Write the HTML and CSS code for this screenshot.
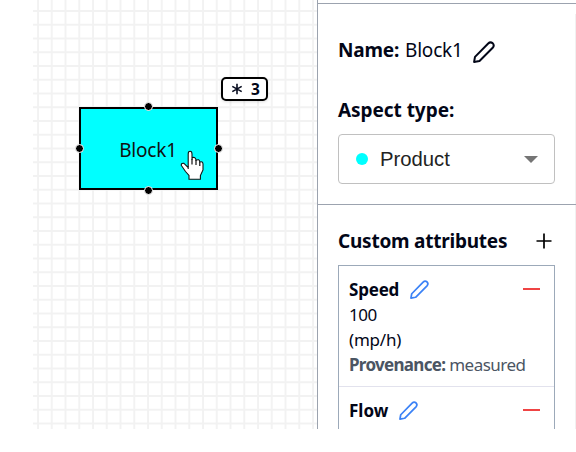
FILE: index.html
```
<!DOCTYPE html>
<html lang="en">
<head>
<meta charset="utf-8">
<title>Block editor</title>
<link rel="stylesheet" href="styles.css">
</head>
<body>
<svg class="symbols" width="0" height="0">
  <symbol id="pencil" viewBox="0 0 22 22"><path d="M1.1 20.9 2 15.9 15.2 2.5Q17.3.4 19.6 2.1 21.8 4.4 19.7 6.8L6.5 20Z" fill="none" stroke="currentColor" stroke-linejoin="round"/></symbol>
</svg>
<div class="app">
  <main class="canvas">
    <svg class="grid" width="284" height="429">
      <defs><pattern id="cells" x="4" y="10" width="13.75" height="13.75" patternUnits="userSpaceOnUse"><path d="M0 1H13.75M1 0V13.75" stroke="#f2f2f2" stroke-width="1.8"/></pattern></defs>
      <rect width="284" height="429" fill="url(#cells)"/>
    </svg>
    <div class="node"><span class="node-label">Block1</span>
      <i class="port top"></i><i class="port right"></i><i class="port bottom"></i><i class="port left"></i>
    </div>
    <div class="badge">
      <svg width="12" height="12" viewBox="0 0 12 12"><path d="M6 .8V11.2M1.3 3.4 10.7 8.6M1.3 8.6 10.7 3.4" stroke="#080d20" stroke-width="1.6"/></svg>
      <b>3</b>
    </div>
    <svg class="cursor" width="24" height="31" viewBox="0 0 24 31"><path d="M8.2 19V4Q8.2 1.2 10.1 1.2 12 1.2 12 4V9.8L12.3 7.5Q15.8 6.8 16 10.2 19.4 8.6 19.8 12 22.8 11 23 14V20L20.4 25.5V29.3H9V25.5L5.5 21.5 1.2 15.2Q1.4 12.8 4 13.4L8.2 17.5Z" fill="#fff" stroke="#111" stroke-width="1.1"/><path d="M12 9V14.5M16 10V15M19.8 12V16" stroke="#111" stroke-width="1.2"/></svg>
  </main>
  <aside class="panel">
    <section class="details">
      <div class="name-row"><b class="name-key">Name:</b><span class="name-value">Block1</span><svg class="pencil"><use href="#pencil"/></svg></div>
      <h2 class="aspect">Aspect type:</h2>
      <div class="select"><i class="swatch"></i><span>Product</span><i class="caret"></i></div>
    </section>
    <section class="attributes">
      <header class="attr-header"><h2 class="attr-title">Custom attributes</h2><svg width="16" height="16" viewBox="0 0 16 16"><path d="M8 .5V15.5M.5 8H15.5" stroke="#000" stroke-width="1.7"/></svg></header>
      <div class="list">
        <article class="item">
          <div class="item-head"><b class="speed">Speed</b><svg class="pencil small"><use href="#pencil"/></svg><i class="minus"></i></div>
          <div class="line value">100</div>
          <div class="line unit">(mp/h)</div>
          <div class="line provenance"><b>Provenance:</b> <span>measured</span></div>
        </article>
        <article class="item">
          <div class="item-head"><b class="flow">Flow</b><svg class="pencil small"><use href="#pencil"/></svg><i class="minus"></i></div>
        </article>
      </div>
    </section>
  </aside>
</div>
</body>
</html>
```

FILE: styles.css
```
* { box-sizing: border-box; }
body { margin: 0; background: #fff; color: #020617; font-family: "Noto Sans", "Open Sans", sans-serif; }
.symbols { position: absolute; }
.app { display: flex; width: 576px; height: 429px; padding-left: 33px; overflow: hidden; }
.canvas { position: relative; width: 284px; flex: none; }
.grid { display: block; }
.node { position: absolute; left: 46px; top: 107px; width: 139px; height: 83px; border: 2px solid #000; background: #0ff; display: flex; align-items: center; justify-content: center; }
.node-label { font-size: 19px; letter-spacing: -0.2px; color: #111; margin-top: 3px; margin-right: 1px; }
.port { position: absolute; width: 9px; height: 9px; border: 1px solid #fff; border-radius: 50%; background: #000; }
.top { left: 63px; top: -7px; }
.bottom { left: 63px; bottom: -7px; }
.left { left: -6px; top: 35px; }
.right { right: -7px; top: 35px; }
.badge { position: absolute; left: 188px; top: 77px; width: 47px; height: 24px; border: 2px solid #000; border-radius: 5px; background: #fff; box-shadow: 0 1px 3px #0002; display: flex; align-items: center; padding-left: 8px; gap: 8px; }
.badge b { font-size: 15.5px; line-height: 20px; }
.cursor { position: absolute; left: 147px; top: 150px; }
.panel { width: 259px; flex: none; border-left: 1px solid #9ca3af; padding-top: 3px; background: linear-gradient(#f1f1f1, #f1f1f1) 257px 14px / 1px 415px no-repeat; }
.details { height: 202px; border-top: 1px solid #9ca3af; border-bottom: 1px solid #9ca3af; padding: 32px 20px 0; }
.name-row { display: flex; align-items: center; height: 28px; font-size: 19px; }
.name-key { width: 67px; letter-spacing: -0.2px; white-space: nowrap; }
.name-value { width: 68px; letter-spacing: -0.2px; }
.pencil { width: 22px; height: 22px; stroke-width: 2px; margin-top: 3px; overflow: visible; }
h2 { margin: 0; font-size: 19px; line-height: 28px; white-space: nowrap; }
.aspect { margin-top: 32px; letter-spacing: -0.05px; }
.select { width: 217px; height: 50px; margin-top: 10px; border: 1px solid #c0c0c0; border-radius: 4px; display: flex; align-items: center; padding: 0 17px; font: 20.3px "Liberation Sans", sans-serif; color: #222; }
.swatch { width: 12px; height: 12px; border-radius: 50%; background: #0ff; margin-right: 12px; }
.caret { margin-left: auto; margin-right: -1px; border: 7px solid transparent; border-top-color: #757575; border-bottom: 0; }
.attributes { padding: 22px 20px 0; }
.attr-header { width: 214px; height: 28px; display: flex; justify-content: space-between; align-items: center; }
.attr-title { letter-spacing: -0.23px; }
.list { width: 217px; height: 180px; margin-top: 10px; border: 1px solid #9ca9b9; }
.item { height: 121px; padding: 11px 14px 0 10px; border-bottom: 1px solid #e2e2ed; }
.item-head { display: flex; align-items: center; height: 25px; font-size: 17px; }
.speed { width: 61px; letter-spacing: -0.2px; }
.flow { width: 50px; letter-spacing: 0; }
.small { width: 19px; height: 19px; color: #3b82f6; stroke-width: 2px; margin-top: -1px; }
.minus { width: 17px; height: 2px; background: #ef4444; margin: -2px 0 0 auto; }
.line { height: 25px; line-height: 25px; font-size: 17px; letter-spacing: -0.5px; white-space: nowrap; }
.unit { letter-spacing: -0.2px; }
.provenance { color: #4b5563; letter-spacing: -0.5px; }
.provenance b { letter-spacing: -0.7px; }
```
